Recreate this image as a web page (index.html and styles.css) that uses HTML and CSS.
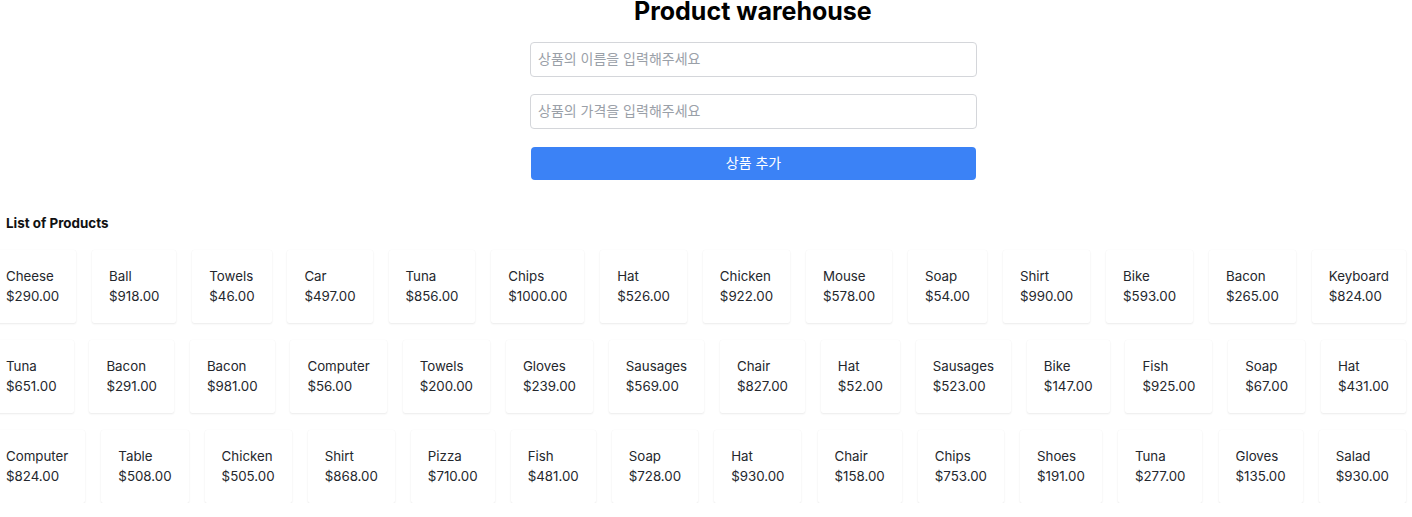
FILE: index.html
```html
<!DOCTYPE html>
<html lang="ko">
<head>
<meta charset="utf-8">
<title>Product warehouse</title>
<link rel="stylesheet" href="styles.css">
</head>
<body>
<div class="page">
  <h1 class="title">Product warehouse</h1>
  <form class="form">
    <input class="field" type="text" placeholder="상품의 이름을 입력해주세요">
    <input class="field" type="text" placeholder="상품의 가격을 입력해주세요">
    <button class="btn" type="button">상품 추가</button>
  </form>
  <h2 class="list-title">List of Products</h2>
  <div class="products">
    <div class="row">
      <div class="card"><div>Cheese</div><div>$290.00</div></div>
      <div class="card"><div>Ball</div><div>$918.00</div></div>
      <div class="card"><div>Towels</div><div>$46.00</div></div>
      <div class="card"><div>Car</div><div>$497.00</div></div>
      <div class="card"><div>Tuna</div><div>$856.00</div></div>
      <div class="card"><div>Chips</div><div>$1000.00</div></div>
      <div class="card"><div>Hat</div><div>$526.00</div></div>
      <div class="card"><div>Chicken</div><div>$922.00</div></div>
      <div class="card"><div>Mouse</div><div>$578.00</div></div>
      <div class="card"><div>Soap</div><div>$54.00</div></div>
      <div class="card"><div>Shirt</div><div>$990.00</div></div>
      <div class="card"><div>Bike</div><div>$593.00</div></div>
      <div class="card"><div>Bacon</div><div>$265.00</div></div>
      <div class="card"><div>Keyboard</div><div>$824.00</div></div>
    </div>
    <div class="row">
      <div class="card"><div>Tuna</div><div>$651.00</div></div>
      <div class="card"><div>Bacon</div><div>$291.00</div></div>
      <div class="card"><div>Bacon</div><div>$981.00</div></div>
      <div class="card"><div>Computer</div><div>$56.00</div></div>
      <div class="card"><div>Towels</div><div>$200.00</div></div>
      <div class="card"><div>Gloves</div><div>$239.00</div></div>
      <div class="card"><div>Sausages</div><div>$569.00</div></div>
      <div class="card"><div>Chair</div><div>$827.00</div></div>
      <div class="card"><div>Hat</div><div>$52.00</div></div>
      <div class="card"><div>Sausages</div><div>$523.00</div></div>
      <div class="card"><div>Bike</div><div>$147.00</div></div>
      <div class="card"><div>Fish</div><div>$925.00</div></div>
      <div class="card"><div>Soap</div><div>$67.00</div></div>
      <div class="card"><div>Hat</div><div>$431.00</div></div>
    </div>
    <div class="row">
      <div class="card"><div>Computer</div><div>$824.00</div></div>
      <div class="card"><div>Table</div><div>$508.00</div></div>
      <div class="card"><div>Chicken</div><div>$505.00</div></div>
      <div class="card"><div>Shirt</div><div>$868.00</div></div>
      <div class="card"><div>Pizza</div><div>$710.00</div></div>
      <div class="card"><div>Fish</div><div>$481.00</div></div>
      <div class="card"><div>Soap</div><div>$728.00</div></div>
      <div class="card"><div>Hat</div><div>$930.00</div></div>
      <div class="card"><div>Chair</div><div>$158.00</div></div>
      <div class="card"><div>Chips</div><div>$753.00</div></div>
      <div class="card"><div>Shoes</div><div>$191.00</div></div>
      <div class="card"><div>Tuna</div><div>$277.00</div></div>
      <div class="card"><div>Gloves</div><div>$135.00</div></div>
      <div class="card"><div>Salad</div><div>$930.00</div></div>
    </div>
  </div>
</div>
</body>
</html>
```

FILE: styles.css
```css
* { box-sizing: border-box; }
html, body { margin: 0; padding: 0; background: #fff; overflow: hidden; }
body {
  font-family: Inter, "Noto Sans CJK KR", "Noto Sans", sans-serif;
  color: #1f2328;
}
.page { display: flex; flex-direction: column; }
.title {
  margin: 0;
  font-size: 25px;
  line-height: 23px;
  height: 24px;
  font-weight: 700;
  color: #000;
  align-self: flex-start;
  margin-left: 634px;
}
.form {
  margin: 18px 0 0 530px;
  width: 447px;
  display: flex;
  flex-direction: column;
  gap: 17px;
}
.field {
  height: 35px;
  border: 1px solid #d4d6da;
  border-radius: 4px;
  padding: 0 7px 3px;
  font-family: "Noto Sans CJK KR", Inter, sans-serif;
  font-size: 14px;
  color: #111;
  outline: none;
  background: #fff;
}
.field::placeholder { color: #9aa0a8; }
.btn {
  height: 33px;
  margin: 1px 1px 0 1px;
  padding: 0 0 4px;
  border: none;
  border-radius: 4px;
  background: #3b82f6;
  color: #fff;
  font-family: "Noto Sans CJK KR", Inter, sans-serif;
  font-size: 14px;
  cursor: pointer;
}
.list-title {
  margin: 35px 0 0 6px;
  font-size: 13.4px;
  line-height: 16px;
  font-weight: 700;
  color: #111;
}
.products {
  margin: 19px 0 0 -11px;
  width: 1417px;
  display: flex;
  flex-direction: column;
  gap: 17px;
}
.row {
  display: flex;
  justify-content: space-between;
}
.card {
  background: #fff;
  padding: 16px 17px 17px;
  font-size: 13.3px;
  line-height: 20px;
  color: #24272d;
  box-shadow: 0 1px 2px rgba(0, 0, 0, 0.08), 0 0 1px rgba(0, 0, 0, 0.06);
  border-radius: 2px;
  white-space: nowrap;
}
```
